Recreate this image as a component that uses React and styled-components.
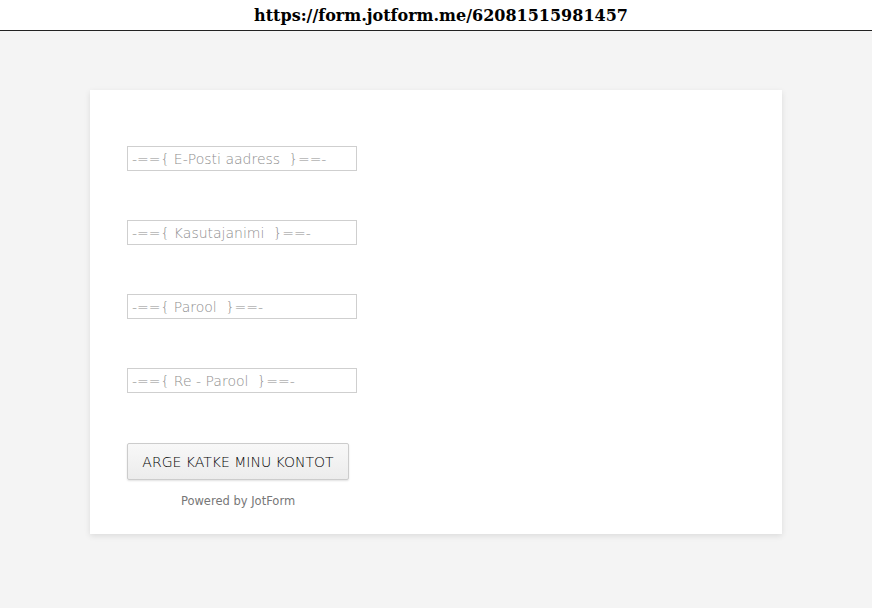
import React from 'react';
import styled, { createGlobalStyle } from 'styled-components';

const Global = createGlobalStyle`
  html, body { margin: 0; padding: 0; background: #f4f4f4; }
  body { width: 872px; height: 608px; overflow: hidden; }
`;

const AddressBar = styled.div`
  height: 30px;
  border-bottom: 1px solid #222;
  background: #fff;
  display: flex;
  align-items: center;
  justify-content: center;
  padding-left: 10px;
  font-family: "DejaVu Serif", serif;
  font-weight: bold;
  font-size: 16px;
  color: #000;
`;

const Page = styled.div`
  padding: 59px 90px 0;
`;

const Card = styled.form`
  width: 692px;
  height: 444px;
  box-sizing: border-box;
  background: #fff;
  box-shadow: 0 2px 6px rgba(0, 0, 0, 0.1);
  padding: 56px 37px 0;
  display: flex;
  flex-direction: column;
  align-items: flex-start;
`;

const Field = styled.input`
  width: 230px;
  height: 25px;
  box-sizing: border-box;
  border: 1px solid #cfcfcf;
  padding: 0 4px;
  margin-bottom: 49px;
  font-family: "DejaVu Sans", sans-serif;
  font-weight: 200;
  font-size: 14px;
  color: #555;
  outline: none;
  &::placeholder { color: #8e8e8e; }
`;

const Submit = styled.button`
  margin-top: 1px;
  width: 222px;
  height: 37px;
  border: 1px solid #ccc;
  border-radius: 2px;
  background: linear-gradient(#f8f8f8, #ececec);
  box-shadow: 0 1px 2px rgba(0, 0, 0, 0.12);
  font-family: "DejaVu Sans", sans-serif;
  font-weight: 200;
  font-size: 14px;
  color: #000;
`;

const Powered = styled.div`
  width: 222px;
  text-align: center;
  margin-top: 14px;
  font-family: "DejaVu Sans", sans-serif;
  font-size: 11.5px;
  color: #777;
`;

const fields = [
  '-=={ E-Posti aadress  }==-',
  '-=={ Kasutajanimi  }==-',
  '-=={ Parool  }==-',
  '-=={ Re - Parool  }==-',
];

export default function App() {
  return (
    <>
      <Global />
      <AddressBar>https://form.jotform.me/62081515981457</AddressBar>
      <Page>
        <Card onSubmit={e => e.preventDefault()}>
          {fields.map(f => (
            <Field key={f} placeholder={f} />
          ))}
          <Submit type="submit">ARGE KATKE MINU KONTOT</Submit>
          <Powered>Powered by JotForm</Powered>
        </Card>
      </Page>
    </>
  );
}
